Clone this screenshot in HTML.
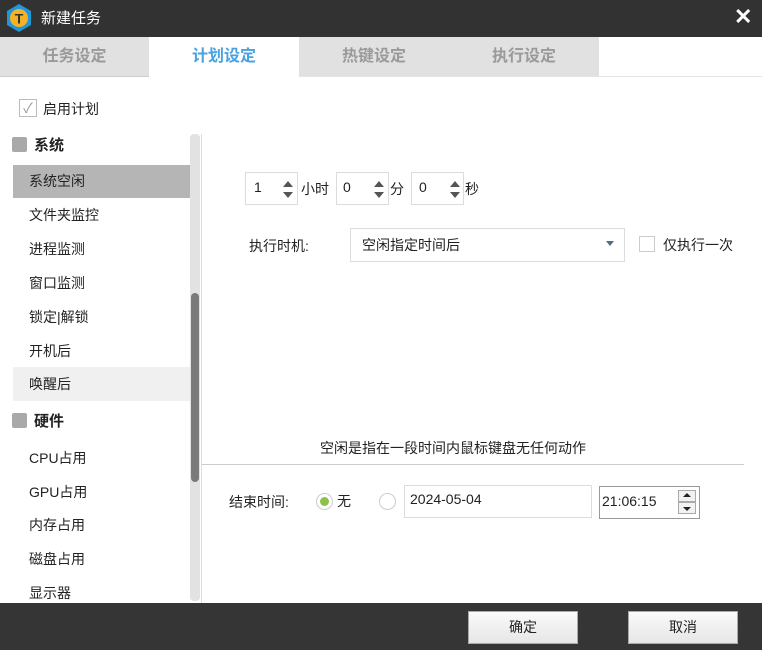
<!DOCTYPE html>
<html><head><meta charset="utf-8"><style>
*{margin:0;padding:0;box-sizing:border-box}
body{width:762px;height:650px;position:relative;background:#fff;font-family:"Liberation Sans","Noto Sans CJK SC",sans-serif;font-size:14px;color:#222;overflow:hidden}
.a{position:absolute}
.tab{position:absolute;top:37px;height:39px;width:150px;background:#e1e1e1;color:#9a9a9a;font-size:16px;font-weight:bold;text-align:center;line-height:39px}
.it{position:absolute;left:29px;font-size:14px;color:#222}
.hd{position:absolute;left:12px;font-size:15px;font-weight:bold}
.hd i{display:inline-block;width:15px;height:15px;background:#a9a9a9;border-radius:2px;vertical-align:-2px;margin-right:7px}
.box{position:absolute;border:1px solid #dcdcdc;background:#fff}
.spin{position:absolute;width:0;height:0;border-left:5px solid transparent;border-right:5px solid transparent}
</style></head><body>
<div class="a" style="left:0;top:0;width:762px;height:37px;background:#323232"></div>
<svg class="a" style="left:4px;top:3px" width="30" height="30" viewBox="0 0 30 30"><polygon points="15,1 27,8 27,22 15,29 3,22 3,8" fill="#2196d9"/><circle cx="15" cy="15" r="9" fill="#f5b324"/><text x="15" y="20.5" font-size="14" font-weight="bold" text-anchor="middle" fill="#333" font-family="Liberation Sans">T</text></svg>
<div class="a" style="left:41px;top:7px;color:#fff;font-size:15px">新建任务</div>
<div class="a" style="left:734px;top:4px;color:#fff;font-size:22px;font-weight:bold">✕</div>
<div class="tab" style="left:0;width:149px">任务设定</div>
<div class="tab" style="left:149px;background:#fff;color:#4aa3df">计划设定</div>
<div class="tab" style="left:299px">热键设定</div>
<div class="tab" style="left:449px">执行设定</div>
<div class="a" style="left:0;top:76px;width:149px;height:1px;background:#ccc"></div>
<div class="a" style="left:299px;top:76px;width:463px;height:1px;background:#e4e4e4"></div>
<div class="box" style="left:19px;top:99px;width:18px;height:18px;border-color:#bbb;color:#999;font-size:14px;line-height:16px;text-align:center">✓</div>
<div class="a" style="left:43px;top:99px">启用计划</div>
<div class="hd" style="top:134px"><i></i>系统</div>
<div class="a" style="left:13px;top:165px;width:177px;height:33px;background:#b5b5b5"></div>
<div class="a" style="left:13px;top:367px;width:177px;height:34px;background:#f0f0f0"></div>
<div class="it" style="top:171px">系统空闲</div>
<div class="it" style="top:205px">文件夹监控</div>
<div class="it" style="top:239px">进程监测</div>
<div class="it" style="top:273px">窗口监测</div>
<div class="it" style="top:307px">锁定|解锁</div>
<div class="it" style="top:341px">开机后</div>
<div class="it" style="top:374px">唤醒后</div>
<div class="hd" style="top:410px"><i></i>硬件</div>
<div class="it" style="top:448px">CPU占用</div>
<div class="it" style="top:482px">GPU占用</div>
<div class="it" style="top:515px">内存占用</div>
<div class="it" style="top:549px">磁盘占用</div>
<div class="it" style="top:583px">显示器</div>
<div class="a" style="left:190px;top:134px;width:10px;height:467px;background:#e2e2e2;border-radius:4px"></div>
<div class="a" style="left:191px;top:293px;width:8px;height:189px;background:#7a7a7a;border-radius:4px"></div>
<div class="a" style="left:201px;top:134px;width:1px;height:469px;background:#ddd"></div>
<div class="box" style="left:245px;top:172px;width:53px;height:33px"></div><div class="a" style="left:254px;top:179px">1</div>
<div class="spin" style="left:283px;top:181px;border-bottom:6px solid #555"></div><div class="spin" style="left:283px;top:192px;border-top:6px solid #555"></div>
<div class="a" style="left:301px;top:179px">小时</div>
<div class="box" style="left:336px;top:172px;width:53px;height:33px"></div><div class="a" style="left:343px;top:179px">0</div>
<div class="spin" style="left:374px;top:181px;border-bottom:6px solid #555"></div><div class="spin" style="left:374px;top:192px;border-top:6px solid #555"></div>
<div class="a" style="left:390px;top:179px">分</div>
<div class="box" style="left:411px;top:172px;width:53px;height:33px"></div><div class="a" style="left:419px;top:179px">0</div>
<div class="spin" style="left:450px;top:181px;border-bottom:6px solid #555"></div><div class="spin" style="left:450px;top:192px;border-top:6px solid #555"></div>
<div class="a" style="left:465px;top:179px">秒</div>
<div class="a" style="left:249px;top:236px">执行时机:</div>
<div class="box" style="left:350px;top:228px;width:275px;height:34px"></div>
<div class="a" style="left:362px;top:235px">空闲指定时间后</div>
<div class="spin" style="left:606px;top:241px;border-top:5px solid #4a6f8a;border-left-width:4px;border-right-width:4px"></div>
<div class="box" style="left:639px;top:236px;width:16px;height:16px;border-color:#ccc"></div>
<div class="a" style="left:663px;top:235px">仅执行一次</div>
<div class="a" style="left:320px;top:438px">空闲是指在一段时间内鼠标键盘无任何动作</div>
<div class="a" style="left:202px;top:464px;width:542px;height:1px;background:#ccc"></div>
<div class="a" style="left:229px;top:492px">结束时间:</div>
<div class="a" style="left:316px;top:493px;width:17px;height:17px;border-radius:50%;border:1px solid #ccc;background:#fff"></div>
<div class="a" style="left:320px;top:497px;width:9px;height:9px;border-radius:50%;background:#8bc34a"></div>
<div class="a" style="left:337px;top:491px">无</div>
<div class="a" style="left:379px;top:493px;width:17px;height:17px;border-radius:50%;border:1px solid #ccc;background:#fff"></div>
<div class="box" style="left:404px;top:485px;width:188px;height:33px"></div>
<div class="a" style="left:410px;top:491px">2024-05-04</div>
<div class="box" style="left:599px;top:486px;width:101px;height:33px;border:1px solid #999"></div>
<div class="a" style="left:602px;top:493px">21:06:15</div>
<div class="a" style="left:678px;top:490px;width:18px;height:12px;border:1px solid #aaa;background:#f2f2f2"></div>
<div class="a" style="left:678px;top:502px;width:18px;height:12px;border:1px solid #aaa;background:#f2f2f2"></div>
<div class="spin" style="left:683px;top:493px;border-bottom:4px solid #222;border-left-width:4px;border-right-width:4px"></div>
<div class="spin" style="left:683px;top:507px;border-top:4px solid #222;border-left-width:4px;border-right-width:4px"></div>
<div class="a" style="left:0;top:603px;width:762px;height:47px;background:#353535"></div>
<div class="a" style="left:468px;top:611px;width:110px;height:33px;background:linear-gradient(#fafafa,#e6e6e6);border:1px solid #aaa;text-align:center;line-height:31px">确定</div>
<div class="a" style="left:628px;top:611px;width:110px;height:33px;background:linear-gradient(#fafafa,#e6e6e6);border:1px solid #aaa;text-align:center;line-height:31px">取消</div>
</body></html>
